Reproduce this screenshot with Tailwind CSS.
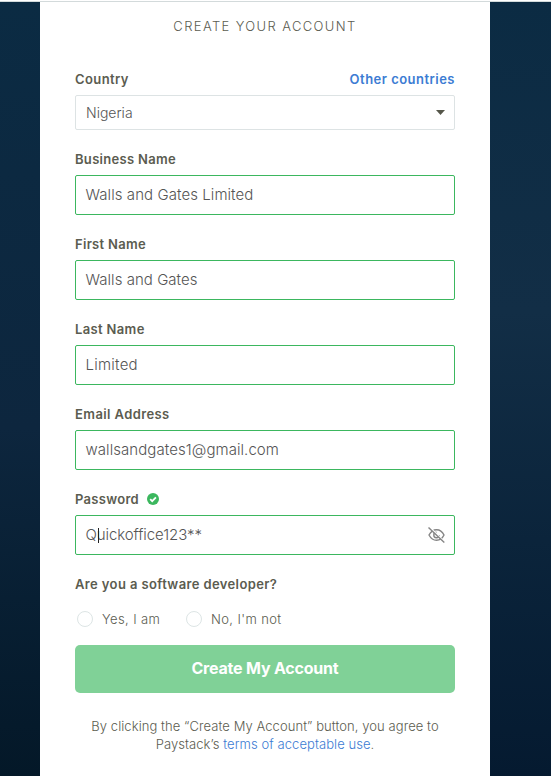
<!DOCTYPE html>
<html lang="en">
<head>
<meta charset="utf-8">
<title>Create your account</title>
<script src="https://cdn.jsdelivr.net/npm/@tailwindcss/browser@4"></script>
</head>
<body class="h-[776px] overflow-hidden bg-[#0c2a43] font-['Inter',sans-serif] text-[#5b5c50]">
<div class="flex h-[776px] flex-col">
  <div class="h-px bg-white"></div>
  <div class="h-px bg-[#d3dadb]"></div>
  <div class="flex flex-1">
    <div class="w-10 bg-linear-to-b from-[#0b2b43] via-[#0d263e] via-55% to-[#041828]"></div>
    <main class="w-[450px] bg-white px-[35px]">
      <h1 class="flex h-[61px] justify-center pt-[12px] text-[13px] font-light leading-6 tracking-[1.38px]"><span>CREATE YOUR ACCOUNT</span></h1>
      <section class="mb-[13px]">
        <div class="flex h-8 items-center justify-between pt-[2px] text-[13px] font-semibold tracking-[0.4px]"><span>Country</span><a class="text-[#3c7cd3] tracking-[0.48px]">Other countries</a></div>
        <div class="flex h-[35px] items-center justify-between rounded-xs border border-[#dde3e4] pb-px pl-[10px] pr-[9px] text-[14px] font-light text-[#555]"><span>Nigeria</span>
          <svg class="mt-px h-[5px] w-[9px]" viewBox="0 0 9 5"><path d="M0 0h9L4.5 5z" fill="#55564a"/></svg></div>
      </section>
      <section class="mb-[13px]">
        <div class="flex h-8 items-center pt-[2px] text-[13px] font-semibold tracking-[0.3px]"><span>Business Name</span></div>
        <div class="flex h-10 items-center rounded-xs border border-[#3bb75e] pl-[9.500px] text-[15px] font-light tracking-[0.07px] text-[#555]"><span>Walls and Gates Limited</span></div>
      </section>
      <section class="mb-[13px]">
        <div class="flex h-8 items-center pt-[2px] text-[13px] font-semibold tracking-[0.3px]"><span>First Name</span></div>
        <div class="flex h-10 items-center rounded-xs border border-[#3bb75e] pl-[9.500px] text-[15px] font-light tracking-[0.04px] text-[#555]"><span>Walls and Gates</span></div>
      </section>
      <section class="mb-[13px]">
        <div class="flex h-8 items-center pt-[2px] text-[13px] font-semibold tracking-[0.35px]"><span>Last Name</span></div>
        <div class="flex h-10 items-center rounded-xs border border-[#3bb75e] pl-[9.500px] text-[15px] font-light tracking-[0.25px] text-[#555]"><span>Limited</span></div>
      </section>
      <section class="mb-[13px]">
        <div class="flex h-8 items-center pt-[2px] text-[13px] font-semibold tracking-[0.4px]"><span>Email Address</span></div>
        <div class="flex h-10 items-center rounded-xs border border-[#3bb75e] pl-[9.500px] text-[15px] font-light tracking-[0.07px] text-[#555]"><span>wallsandgates1@gmail.com</span></div>
      </section>
      <section class="mb-[13px]">
        <div class="flex h-8 items-center text-[13px] font-semibold tracking-[0.3px]"><span class="w-[72px] pt-[2px]">Password</span>
          <svg class="size-3" viewBox="0 0 12 12"><circle cx="6" cy="6" r="6" fill="#3bb75e"/><path d="M3.2 6.1l2 2 3.7-3.8" fill="none" stroke="#fff" stroke-width="1.8"/></svg></div>
        <div class="relative flex h-10 items-center justify-between rounded-xs border border-[#3bb75e] pl-[9.500px] pr-[9px] text-[15px] font-light tracking-[-0.08px] text-[#555]"><span>Quickoffice123**</span>
          <i class="absolute left-[22px] top-[12px] h-[15px] w-px bg-[#222]"></i>
          <svg class="h-4 w-[17px]" viewBox="0 0 17 16" fill="none" stroke="#858585" stroke-width="1.400"><path d="M1 8C3 4.3 5.6 2.7 8.6 2.7S14.200 4.300 16 8c-1.800 3.700-4.400 5.300-7.400 5.300S3 11.700 1 8z"/><path d="M8.500 5.300a2.700 2.700 0 1 0 2.700 2.900"/><path d="M1.700.2l15 15" stroke="#fff" stroke-width="1.500"/><path d="M.5.500l15.800 15"/></svg></div>
      </section>
      <section>
        <div class="flex h-8 items-center pt-[2px] text-[13px] font-semibold tracking-[0.38px]"><span>Are you a software developer?</span></div>
        <div class="flex h-[45px] items-start pl-[2px] pt-[11px] text-[13px] font-light leading-4 tracking-[0.38px]">
          <i class="mr-[9px] size-4 rounded-full border border-[#dde5e5]"></i><span class="w-[84px]">Yes, I am</span>
          <i class="mr-[9px] size-4 rounded-full border border-[#dde5e5]"></i><span>No, I'm not</span>
        </div>
      </section>
      <button class="flex h-12 w-full items-center justify-center rounded-[5px] bg-[#80d197] pb-[2px] text-[16px] font-bold tracking-[-0.2px] text-white"><span>Create My Account</span></button>
      <p class="mt-[24px] text-center text-[13px] font-light leading-[18px] tracking-[0.07px]"><span>By clicking the “Create My Account” button, you agree to</span><br><span>Paystack’s <a class="text-[#3c7cd3]">terms of acceptable use</a>.</span></p>
    </main>
    <div class="flex-1 bg-linear-to-b from-[#0b2b43] via-[#122e46] via-40% to-[#051a30]"></div>
  </div>
</div>
</body>
</html>
